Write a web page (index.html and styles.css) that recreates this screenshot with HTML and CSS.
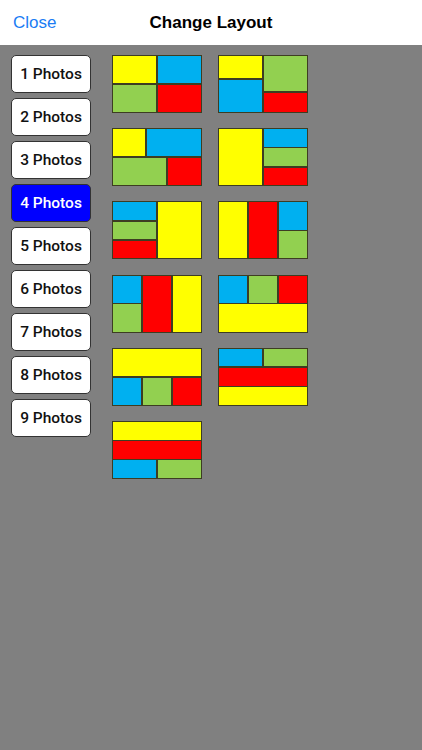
FILE: index.html
```html
<!DOCTYPE html>
<html>
<head>
<meta charset="utf-8">
<link rel="stylesheet" href="styles.css">
</head>
<body>
<header class="navbar">
  <span class="close">Close</span>
  <span class="title">Change Layout</span>
</header>
<main class="content">
  <nav class="buttons">
    <div class="btn">1 Photos</div>
    <div class="btn">2 Photos</div>
    <div class="btn">3 Photos</div>
    <div class="btn active">4 Photos</div>
    <div class="btn">5 Photos</div>
    <div class="btn">6 Photos</div>
    <div class="btn">7 Photos</div>
    <div class="btn">8 Photos</div>
    <div class="btn">9 Photos</div>
  </nav>
  <section class="thumbs">
    <div class="thumb l1"><i class="y"></i><i class="b"></i><i class="g"></i><i class="r"></i></div>
    <div class="thumb l2"><i class="y"></i><i class="b"></i><i class="g"></i><i class="r"></i></div>
    <div class="thumb l3"><i class="y"></i><i class="b"></i><i class="g"></i><i class="r"></i></div>
    <div class="thumb l4"><i class="y"></i><i class="b"></i><i class="g"></i><i class="r"></i></div>
    <div class="thumb l5"><i class="y"></i><i class="b"></i><i class="g"></i><i class="r"></i></div>
    <div class="thumb l6"><i class="y"></i><i class="b"></i><i class="g"></i><i class="r"></i></div>
    <div class="thumb l7"><i class="y"></i><i class="b"></i><i class="g"></i><i class="r"></i></div>
    <div class="thumb l8"><i class="y"></i><i class="b"></i><i class="g"></i><i class="r"></i></div>
    <div class="thumb l9"><i class="y"></i><i class="b"></i><i class="g"></i><i class="r"></i></div>
    <div class="thumb l10"><i class="y"></i><i class="b"></i><i class="g"></i><i class="r"></i></div>
    <div class="thumb l11"><i class="y"></i><i class="b"></i><i class="g"></i><i class="r"></i></div>
  </section>
</main>
</body>
</html>
```
FILE: styles.css
```css
html, body {
  margin: 0;
  padding: 0;
  height: 100%;
}
body {
  background: #808080;
  font-family: "Liberation Sans", Arial, sans-serif;
  display: flex;
  flex-direction: column;
}
.navbar {
  height: 45px;
  background: #ffffff;
  display: grid;
  grid-template-columns: 1fr auto 1fr;
  align-items: center;
  padding: 0 13px;
  flex: none;
}
.close {
  color: #1a7cf4;
  font-size: 17px;
}
.title {
  font-size: 17px;
  font-weight: bold;
  color: #000;
}
.content {
  flex: 1;
  display: flex;
  padding: 10px 0 0 11px;
  gap: 21px;
  align-items: flex-start;
}
.buttons {
  display: flex;
  flex-direction: column;
  gap: 5px;
  width: 80px;
}
.btn {
  height: 38px;
  box-sizing: border-box;
  background: #ffffff;
  border: 1px solid #333;
  border-radius: 5px;
  display: flex;
  align-items: center;
  justify-content: center;
  font-family: Roboto, "Liberation Sans", sans-serif;
  font-weight: 500;
  font-size: 15.5px;
  color: #111;
}
.btn.active {
  background: #0000ff;
  color: #ffffff;
}
.thumbs {
  display: grid;
  grid-template-columns: 90px 90px;
  grid-auto-rows: 58px;
  column-gap: 16px;
  row-gap: 15.2px;
}
.thumb {
  box-sizing: border-box;
  border: 1.5px solid #3d3d22;
  background: #3d3d22;
  display: grid;
  gap: 1.5px;
}
.thumb i { display: block; }
.y { background: #ffff00; grid-area: y; }
.b { background: #00b0f0; grid-area: b; }
.g { background: #92d050; grid-area: g; }
.r { background: #ff0000; grid-area: r; }

.l1 {
  grid-template-columns: 1fr 1fr;
  grid-template-rows: 1fr 1fr;
  grid-template-areas: "y b" "g r";
}
.l2 {
  grid-template-columns: 1fr 1fr;
  grid-template-rows: 23fr 12fr 20fr;
  grid-template-areas: "y g" "b g" "b r";
}
.l3 {
  grid-template-columns: 34fr 21fr 35fr;
  grid-template-rows: 1fr 1fr;
  grid-template-areas: "y b b" "g g r";
}
.l4 {
  grid-template-columns: 1fr 1fr;
  grid-template-rows: 1fr 1fr 1fr;
  grid-template-areas: "y b" "y g" "y r";
}
.l5 {
  grid-template-columns: 1fr 1fr;
  grid-template-rows: 1fr 1fr 1fr;
  grid-template-areas: "b y" "g y" "r y";
}
.l6 {
  grid-template-columns: 1fr 1fr 1fr;
  grid-template-rows: 1fr 1fr;
  grid-template-areas: "y r b" "y r g";
}
.l7 {
  grid-template-columns: 1fr 1fr 1fr;
  grid-template-rows: 1fr 1fr;
  grid-template-areas: "b r y" "g r y";
}
.l8 {
  grid-template-columns: 1fr 1fr 1fr;
  grid-template-rows: 1fr 1fr;
  grid-template-areas: "b g r" "y y y";
}
.l9 {
  grid-template-columns: 1fr 1fr 1fr;
  grid-template-rows: 1fr 1fr;
  grid-template-areas: "y y y" "b g r";
}
.l10 {
  grid-template-columns: 1fr 1fr;
  grid-template-rows: 1fr 1fr 1fr;
  grid-template-areas: "b g" "r r" "y y";
}
.l11 {
  grid-template-columns: 1fr 1fr;
  grid-template-rows: 1fr 1fr 1fr;
  grid-template-areas: "y y" "r r" "b g";
}
```
